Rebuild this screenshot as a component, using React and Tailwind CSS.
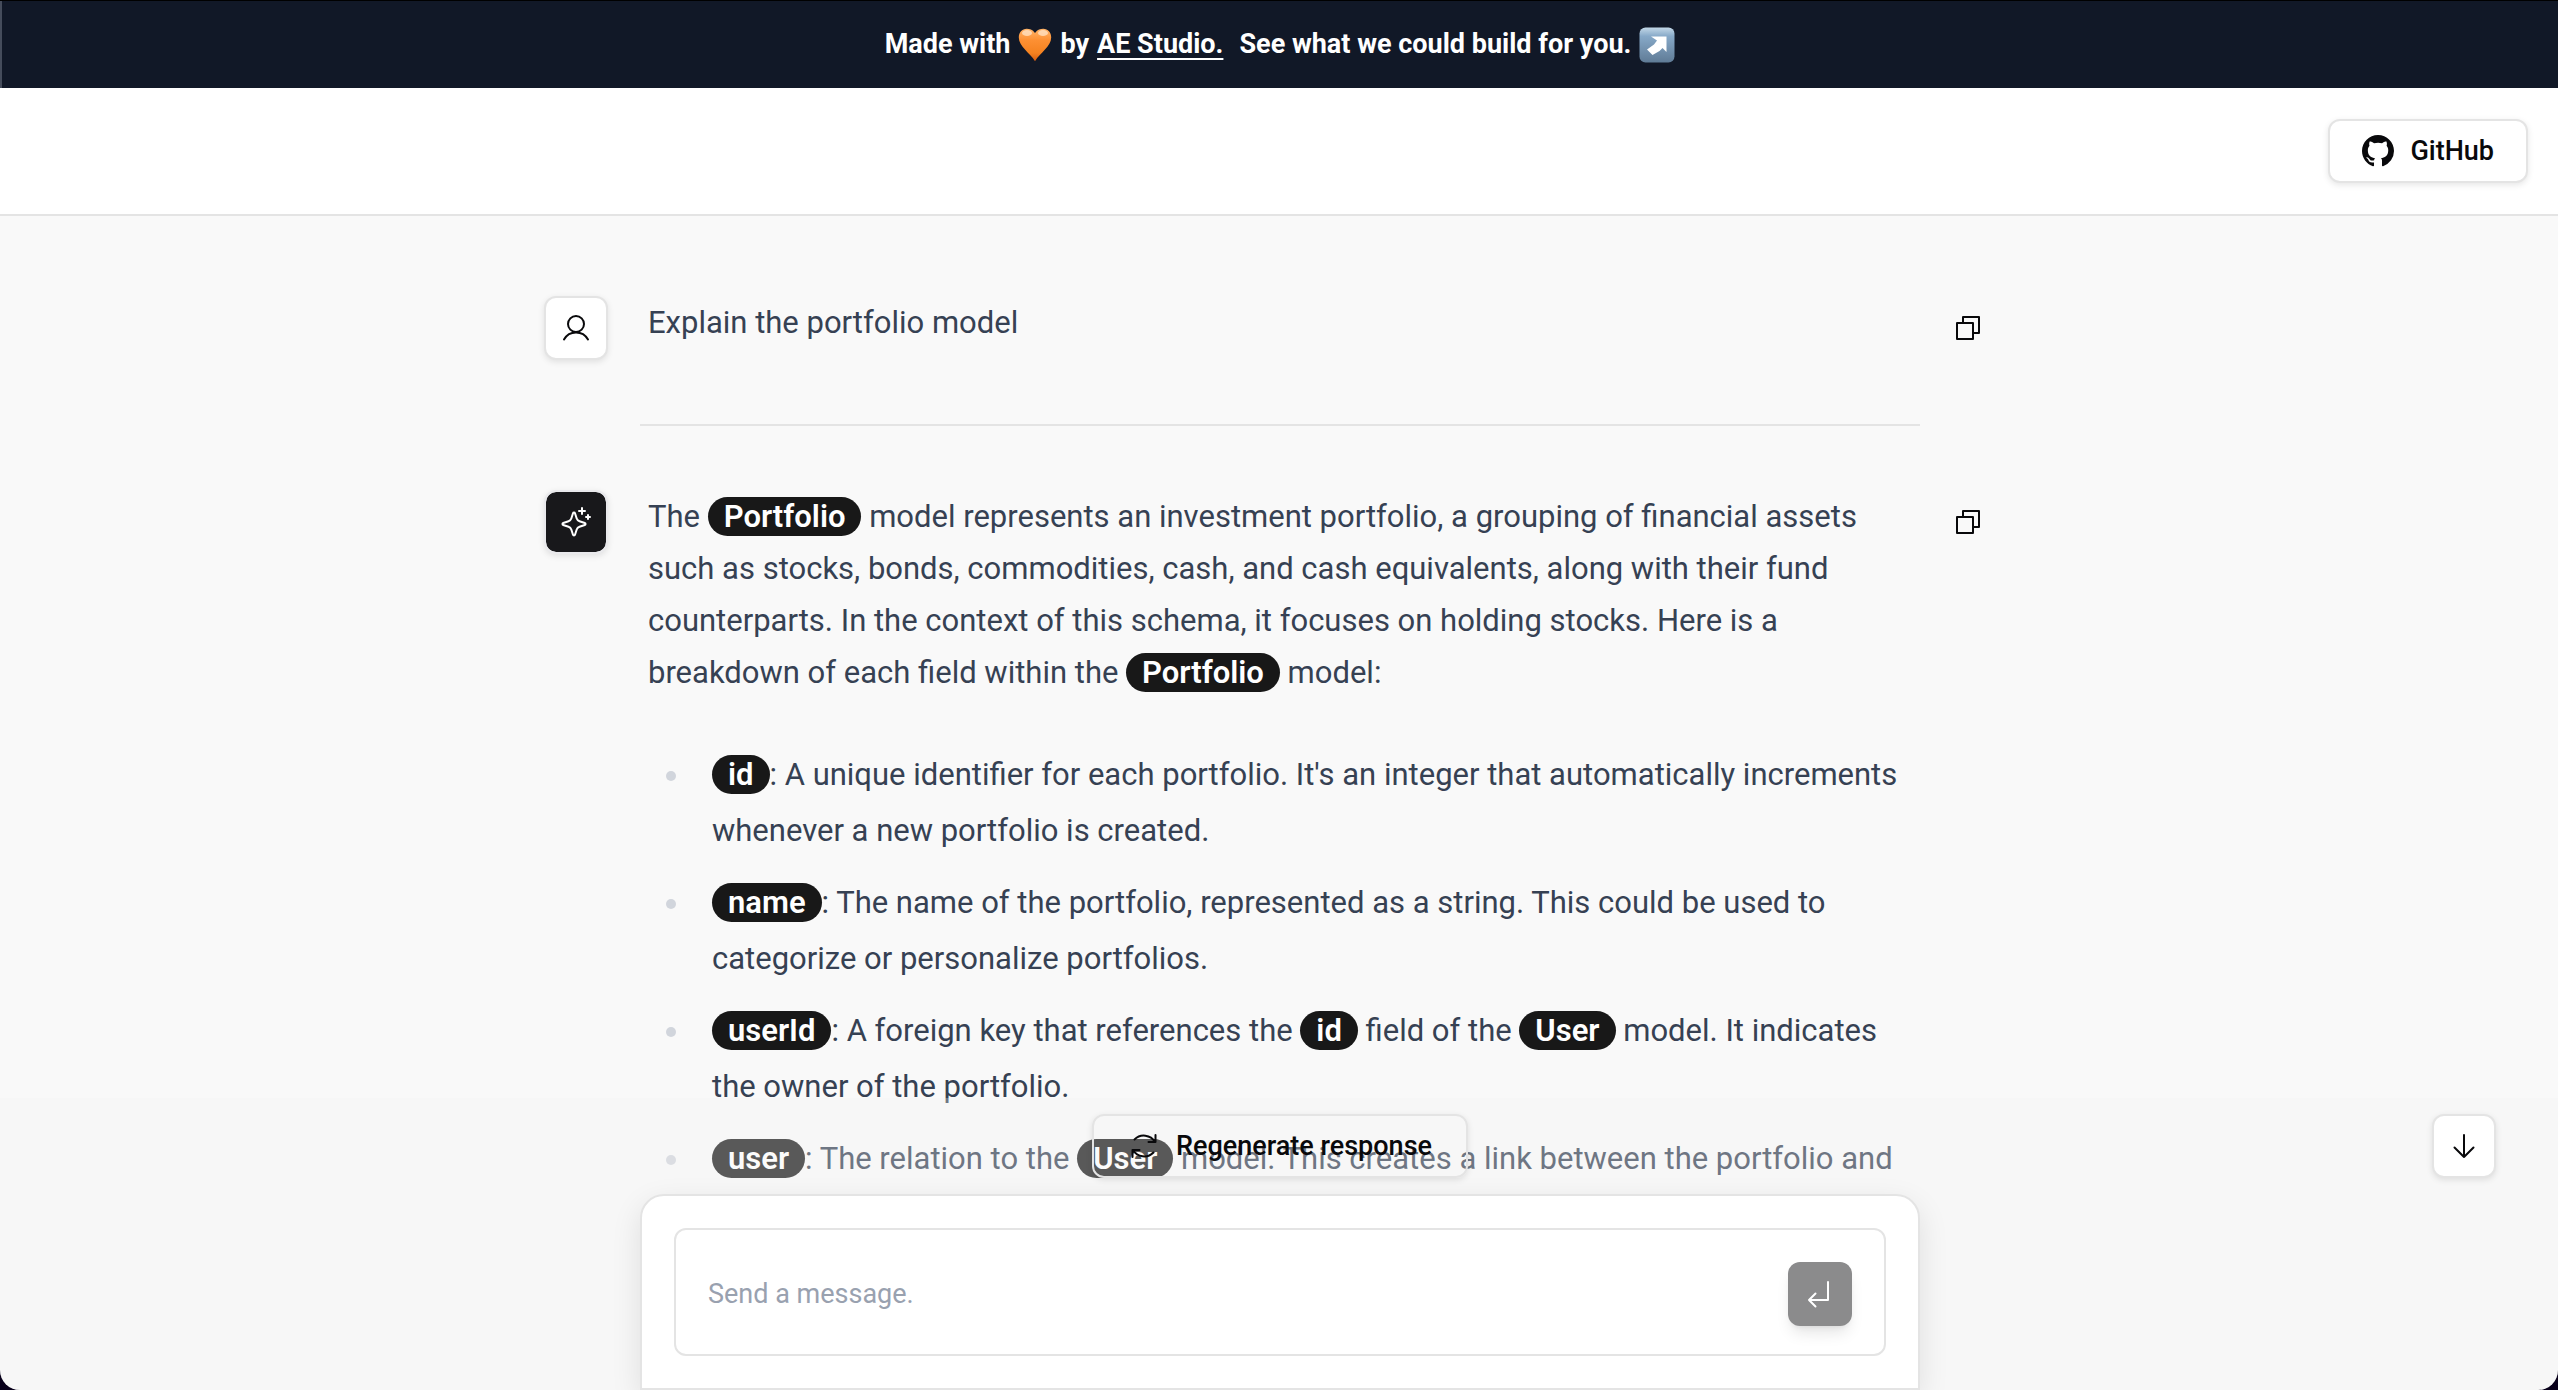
import React, { useState } from "react";

const iconProps = {
  viewBox: "0 0 32 32",
  fill: "none",
  stroke: "currentColor",
  strokeWidth: 2,
  strokeLinecap: "round",
  strokeLinejoin: "round",
  className: "size-8 shrink-0",
  "aria-hidden": true,
};

const UserIcon = () => (
  <svg {...iconProps}>
    <circle cx="16" cy="12" r="8" />
    <path d="M4 27.5a13.8 13.8 0 0 1 24 0" />
  </svg>
);

const SparkleIcon = () => (
  <svg {...iconProps}>
    <path d="M13 7.2c.3-1 1.700-1 2 0l1.700 5.300a4.500 4.500 0 0 0 2.800 2.800l5.300 1.700c1 .3 1 1.700 0 2l-5.300 1.700a4.500 4.500 0 0 0-2.800 2.800L15 28.800c-.3 1-1.700 1-2 0l-1.700-5.300a4.500 4.500 0 0 0-2.800-2.800L3.200 19c-1-.3-1-1.700 0-2l5.300-1.700a4.500 4.500 0 0 0 2.800-2.800z" />
    <path d="M22 2v6M19 5h6M28 9v4M26 11h4" />
  </svg>
);

const CopyIcon = () => (
  <svg {...iconProps}>
    <rect x="5" y="11" width="16" height="16" />
    <path d="M11 11V5h16v16h-6" />
  </svg>
);

const RefreshIcon = () => (
  <svg {...iconProps}>
    <path d="M6.5 9.5A13 13 0 0 1 27 12M27.500 5v7h-7" />
    <path d="M25.500 22.500A13 13 0 0 1 5 20M4.500 27v-7h7" />
  </svg>
);

const ArrowDownIcon = () => (
  <svg {...iconProps}>
    <path d="M16 5v22M6.500 17.500 16 27l9.500-9.500" />
  </svg>
);

const ReturnIcon = () => (
  <svg {...iconProps}>
    <path d="M24 4v18H5M11.500 15.500 5 22l6.500 6.500" />
  </svg>
);

const GithubIcon = () => (
  <svg viewBox="0 0 16 16" fill="currentColor" className="size-8 shrink-0" aria-hidden="true">
    <path d="M8 0C3.580 0 0 3.580 0 8c0 3.540 2.290 6.530 5.470 7.590.4.070.55-.17.55-.38 0-.19-.01-.82-.01-1.490-2.010.37-2.530-.49-2.690-.94-.09-.23-.48-.94-.82-1.130-.28-.15-.68-.52-.01-.53.63-.01 1.080.58 1.230.82.72 1.210 1.870.87 2.330.66.07-.52.28-.87.51-1.070-1.780-.2-3.640-.89-3.640-3.950 0-.87.31-1.590.82-2.150-.08-.2-.36-1.020.08-2.120 0 0 .67-.21 2.200.82.64-.18 1.320-.27 2-.27s1.360.09 2 .27c1.530-1.040 2.200-.82 2.200-.82.44 1.100.16 1.920.08 2.120.51.56.82 1.270.82 2.150 0 3.070-1.870 3.750-3.650 3.950.29.25.54.73.54 1.480 0 1.070-.01 1.930-.01 2.200 0 .21.15.46.55.38A8.010 8.010 0 0 0 16 8c0-4.420-3.580-8-8-8z" />
  </svg>
);

const HeartIcon = () => (
  <svg viewBox="0 0 34 34" className="h-[34px] w-[34px]" role="img" aria-label="orange heart">
    <defs>
      <linearGradient id="heart" x1="0" y1="0" x2="0" y2="1">
        <stop offset="0" stopColor="#ffb46a" />
        <stop offset="0.35" stopColor="#fd9033" />
        <stop offset="0.75" stopColor="#f58220" />
        <stop offset="1" stopColor="#d65c10" />
      </linearGradient>
    </defs>
    <path
      fill="url(#heart)"
      d="M17 5C14.500 1.500 11.500.8 8.800.8 4 .8.800 4.600.8 9.600.8 18.500 12 25 17 33.200 22 25 33.200 18.500 33.200 9.600c0-5-3.200-8.800-8-8.800-2.700 0-5.700.7-8.200 4.200z"
    />
    <ellipse cx="9" cy="5" rx="5" ry="3" fill="#ffe9d2" opacity="0.7" />
    <ellipse cx="25" cy="5" rx="5" ry="3" fill="#ffe9d2" opacity="0.7" />
  </svg>
);

const UpRightIcon = () => (
  <svg viewBox="0 0 36 36" className="size-9" role="img" aria-label="up-right arrow">
    <defs>
      <linearGradient id="tile" x1="0" y1="0" x2="0" y2="1">
        <stop offset="0" stopColor="#c3d8e8" />
        <stop offset="0.25" stopColor="#87a9c8" />
        <stop offset="1" stopColor="#5f7b96" />
      </linearGradient>
    </defs>
    <rect x="0.500" y="0.500" width="35" height="35" rx="6" fill="url(#tile)" />
    <path fill="#fff" d="M12 9.500H27.500V25l-4-4-3 3-7 4-5.500-5.500 7-5 3-4z" />
  </svg>
);

const Tag = ({ children }) => (
  <code className="rounded-full bg-[#181818] px-4 py-px font-[Roboto,sans-serif] font-semibold text-white">
    {children}
  </code>
);

const fields = [
  <>
    <Tag>id</Tag>: A unique identifier for each portfolio. It's an integer that automatically increments
    <br />
    whenever a new portfolio is created.
  </>,
  <>
    <Tag>name</Tag>: The name of the portfolio, represented as a string. This could be used to
    <br />
    categorize or personalize portfolios.
  </>,
  <>
    <Tag>userId</Tag>: A foreign key that references the <Tag>id</Tag> field of the <Tag>User</Tag> model. It indicates
    <br />
    the owner of the portfolio.
  </>,
  <>
    <Tag>user</Tag>: The relation to the <Tag>User</Tag> model. This creates a link between the portfolio and
  </>,
];

const Message = ({ icon, dark, children }) => (
  <article className="-mr-20 -ml-24 flex items-start">
    <div
      className={
        dark
          ? "flex size-16 shrink-0 items-center justify-center rounded-xl border-2 border-[#e9e9ec] bg-[#18181b] bg-clip-padding text-white shadow-[0_2px_6px_rgb(0_0_0/0.1)]"
          : "flex size-16 shrink-0 items-center justify-center rounded-xl border-2 border-[#e4e4e4] bg-white shadow-[0_2px_6px_rgb(0_0_0/0.1)]"
      }
    >
      {icon}
    </div>
    <div className="ml-10 min-w-0 flex-1 pt-px text-[31px] leading-[52px] whitespace-nowrap text-gray-700">
      {children}
    </div>
    <button type="button" aria-label="Copy message" className="flex size-16 shrink-0 items-center justify-center">
      <CopyIcon />
    </button>
  </article>
);

const App = () => {
  const [message, setMessage] = useState("");

  return (
    <div className="h-screen bg-[#08001a] font-[Roboto,sans-serif] text-[27px] text-[#09090b]">
      <div className="flex h-full flex-col overflow-hidden rounded-b-[20px] bg-[#f9f9f9]">
        <div className="border-t border-black">
          <div className="flex h-[87px] items-center justify-center gap-2 border-l-2 border-[#454c5b] bg-[#111827] font-bold text-white">
            <span>Made with</span>
            <HeartIcon />
            <span>by</span>
            <a href="#studio" className="underline decoration-2 underline-offset-[5px]">
              AE Studio.
            </a>
            <span className="ml-2">See what we could build for you.</span>
            <UpRightIcon />
          </div>
        </div>

        <header className="flex h-32 shrink-0 items-center justify-end border-b-2 border-[#e4e4e4] bg-white pr-[30px]">
          <a
            href="#github"
            className="flex h-16 items-center gap-4 rounded-xl border-2 border-[#e4e4e4] bg-white px-8 font-medium shadow-[0_2px_6px_rgb(0_0_0/0.1)]"
          >
            <GithubIcon />
            GitHub
          </a>
        </header>

        <main className="relative min-h-0 flex-1 overflow-hidden pl-0.5">
          <div className="mx-auto max-w-[1280px] pt-20">
            <Message icon={<UserIcon />}>
              <p>Explain the portfolio model</p>
            </Message>
            <hr className="my-16 border-t-2 border-[#e4e4e4]" />
            <Message icon={<SparkleIcon />} dark>
              <p>
                The <Tag>Portfolio</Tag> model represents an investment portfolio, a grouping of financial assets
                <br />
                such as stocks, bonds, commodities, cash, and cash equivalents, along with their fund
                <br />
                counterparts. In the context of this schema, it focuses on holding stocks. Here is a
                <br />
                breakdown of each field within the <Tag>Portfolio</Tag> model:
              </p>
              <ul className="mt-12 space-y-4 pl-[18px] leading-[56px]">
                {fields.map((field, i) => (
                  <li key={i} className="flex gap-9">
                    <span className="mt-6 size-2.5 shrink-0 rounded-full bg-gray-300" />
                    <p>{field}</p>
                  </li>
                ))}
              </ul>
            </Message>
          </div>

          <div className="absolute inset-x-0 bottom-0 bg-[#f2f2f2]/30 pt-4 pl-0.5">
            <button
              type="button"
              aria-label="Scroll to bottom"
              className="absolute top-4 right-[62px] flex size-16 items-center justify-center rounded-xl border-2 border-[#e4e4e4] bg-white shadow-[0_2px_6px_rgb(0_0_0/0.1)]"
            >
              <ArrowDownIcon />
            </button>
            <div className="mx-auto max-w-[1280px]">
              <button
                type="button"
                className="mx-auto flex h-16 w-94 items-center justify-center gap-4 rounded-xl border-2 border-[#e4e4e4] font-medium shadow-[0_2px_6px_rgb(0_0_0/0.1)]"
              >
                <RefreshIcon />
                Regenerate response
              </button>
              <form
                onSubmit={(e) => e.preventDefault()}
                className="mt-4 rounded-t-3xl border-2 border-[#e4e4e4] bg-white p-8 shadow-[0_10px_30px_rgb(0_0_0/0.1)]"
              >
                <div className="flex h-32 items-center rounded-xl border-2 border-[#e4e4e4] px-8 pt-1">
                  <input
                    type="text"
                    aria-label="Message"
                    placeholder="Send a message."
                    value={message}
                    onChange={(e) => setMessage(e.target.value)}
                    className="min-w-0 flex-1 outline-none placeholder:text-gray-400"
                  />
                  <button
                    type="submit"
                    aria-label="Send message"
                    className="flex size-16 items-center justify-center rounded-xl bg-[#8b8b8c] text-white shadow-lg"
                  >
                    <ReturnIcon />
                  </button>
                </div>
              </form>
            </div>
          </div>
        </main>
      </div>
    </div>
  );
};

export default App;
